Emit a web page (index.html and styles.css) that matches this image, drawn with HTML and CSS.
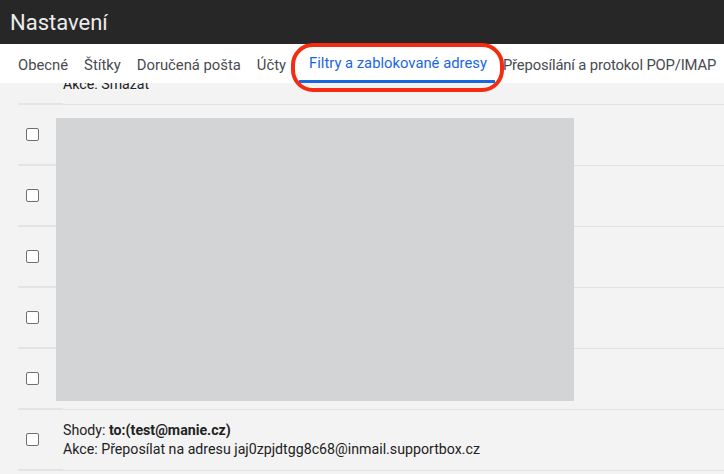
FILE: index.html
```html
<!DOCTYPE html>
<html lang="cs">
<head>
<meta charset="utf-8">
<title>Nastavení</title>
<link rel="stylesheet" href="styles.css">
</head>
<body>
<header class="topbar">
  <h1 class="title">Nastavení</h1>
</header>
<nav class="tabs">
  <a class="tab">Obecné</a>
  <a class="tab">Štítky</a>
  <a class="tab">Doručená pošta</a>
  <a class="tab">Účty</a>
  <a class="tab active">Filtry a zablokované adresy<span class="ring"></span></a>
  <a class="tab tight">Přeposílání a protokol POP/IMAP</a>
</nav>
<main class="filters">
  <div class="row partial">
    <div class="cell-check"></div>
    <div class="cell-text"><div class="line">Akce: Smazat</div></div>
  </div>
  <div class="row">
    <div class="cell-check"><span class="box"></span></div>
    <div class="cell-text"></div>
  </div>
  <div class="row">
    <div class="cell-check"><span class="box"></span></div>
    <div class="cell-text"></div>
  </div>
  <div class="row">
    <div class="cell-check"><span class="box"></span></div>
    <div class="cell-text"></div>
  </div>
  <div class="row">
    <div class="cell-check"><span class="box"></span></div>
    <div class="cell-text"></div>
  </div>
  <div class="row">
    <div class="cell-check"><span class="box"></span></div>
    <div class="cell-text"></div>
  </div>
  <div class="row">
    <div class="cell-check"><span class="box"></span></div>
    <div class="cell-text">
      <div class="line">Shody: <b>to:(test@manie.cz)</b></div>
      <div class="line">Akce: Přeposílat na adresu jaj0zpjdtgg8c68@inmail.supportbox.cz</div>
    </div>
  </div>
  <div class="redacted"></div>
</main>
</body>
</html>
```
FILE: styles.css
```css
* { box-sizing: border-box; }

html, body {
  margin: 0;
  height: 100%;
  overflow: hidden;
  background: #f3f3f3;
  font-family: Roboto, "Noto Sans", sans-serif;
}

.topbar {
  height: 44px;
  background: #272727;
  display: flex;
  align-items: center;
  padding-left: 10px;
}

.title {
  margin: 0;
  font-weight: 400;
  font-size: 22px;
  color: #ececec;
}

.tabs {
  position: relative;
  z-index: 2;
  height: 39px;
  background: #fff;
  display: flex;
  align-items: stretch;
  padding-left: 18px;
  gap: 16px;
  white-space: nowrap;
}

.tab {
  position: relative;
  display: flex;
  align-items: center;
  font-size: 14.8px;
  color: #474b50;
  padding-top: 2px;
}

.tab.tight { letter-spacing: -0.15px; }

.tab.active {
  color: #1a66e0;
  margin: 0 -8px 0 -3px;
  padding: 2px 8px 0 10px;
  border-bottom: 3px solid #1a66e0;
}

/* red highlight ring drawn around the selected tab */
.ring {
  position: absolute;
  left: -8px;
  right: -9px;
  top: -1px;
  bottom: -12px;
  border: 4px solid #f52c12;
  border-radius: 22px;
}

.filters {
  position: relative;
  padding-left: 18px;
}

.row {
  display: flex;
  height: 61px;
}

.row.partial { height: 22px; overflow: hidden; }
.row.partial .cell-text { justify-content: flex-start; }
.row.partial .line { margin-top: -8px; }

.cell-check {
  width: 45px;
  flex: none;
  display: flex;
  align-items: center;
  padding-left: 8px;
  border-bottom: 2px solid #e4e4e4;
}

.cell-text {
  flex: 1;
  display: flex;
  flex-direction: column;
  justify-content: center;
  border-bottom: 1px solid #e2e2e2;
  font-size: 14.2px;
  color: #222;
}

.line { line-height: 19px; }
.line b { font-weight: 700; }

.box {
  width: 13px;
  height: 13px;
  border: 1.5px solid #707070;
  border-radius: 2px;
  background: #fff;
}

/* grey block covering the hidden filter rows */
.redacted {
  position: absolute;
  left: 56px;
  top: 35px;
  width: 518px;
  height: 283px;
  background: #d3d4d6;
}
```
